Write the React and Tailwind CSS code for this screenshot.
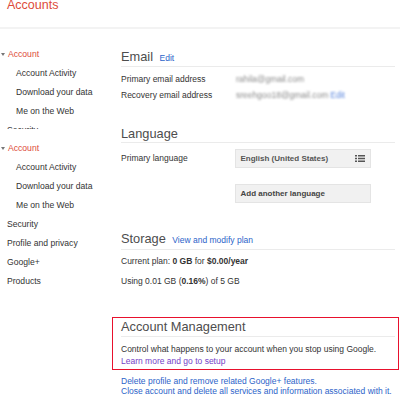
import React from 'react';

const font = { fontFamily: '"Liberation Sans", Arial, sans-serif' };

const Arrow = () => (
    <span className="inline-block w-0 h-0 border-l-[2px] border-r-[2px] border-t-[3px] border-l-transparent border-r-transparent border-t-[#777] mr-[3.5px] ml-[0.5px]" />
);

const NavBlock = () => (
    <>
        <div className="h-[19px] flex items-center text-[#dd4b39]">
            <Arrow />
            Account
        </div>
        <div className="h-[19px] flex items-center pl-[16px] text-[#333]">Account Activity</div>
        <div className="h-[19px] flex items-center pl-[16px] text-[#333]">Download your data</div>
        <div className="h-[19px] flex items-center pl-[16px] text-[#333]">Me on the Web</div>
        <div className="h-[19px] flex items-center pl-[7px] text-[#333]">Security</div>
    </>
);

const Heading = ({ title, link, className = '' }) => (
    <div className={`flex items-baseline gap-[6.5px] border-b border-[#ebebeb] pb-[1.5px] ${className}`}>
        <span className="text-[12.8px] leading-[14px] text-[#4d4d4d]">{title}</span>
        {link && <span className="text-[8.5px] text-[#2b63c9]">{link}</span>}
    </div>
);

const ListIcon = () => (
    <svg width="10" height="7" viewBox="0 0 10 7" className="fill-[#555]">
        <rect x="0" y="0" width="2" height="1.5" />
        <rect x="3" y="0" width="7" height="1.5" />
        <rect x="0" y="2.75" width="2" height="1.5" />
        <rect x="3" y="2.75" width="7" height="1.5" />
        <rect x="0" y="5.5" width="2" height="1.5" />
        <rect x="3" y="5.5" width="7" height="1.5" />
    </svg>
);

export default function App() {
    return (
        <div className="w-[400px] h-[400px] overflow-hidden bg-white" style={font}>
            {/* header */}
            <div className="h-[27px] pl-[7px] overflow-hidden">
                <div className="-mt-[1px] text-[12.5px] leading-[12px] text-[#dd4b39]">Accounts</div>
            </div>
            <div className="h-[2px] bg-[#f3f3f3]" />

            <div className="flex">
                {/* sidebar */}
                <div className="w-[121px] shrink-0 text-[8.6px]">
                    <div className="mt-[16px] h-[83.5px] overflow-hidden">
                        <NavBlock />
                    </div>
                    <div className="mt-[10px]">
                        <NavBlock />
                        <div className="h-[19px] flex items-center pl-[7px] text-[#333]">Profile and privacy</div>
                        <div className="h-[19px] flex items-center pl-[7px] text-[#333]">Google+</div>
                        <div className="h-[19px] flex items-center pl-[7px] text-[#333]">Products</div>
                    </div>
                </div>

                {/* main */}
                <div className="w-[274px] shrink-0 text-[8.5px] text-[#333]">
                    <Heading title="Email" link="Edit" className="mt-[20.5px]" />
                    <div className="mt-[5px]">
                        <div className="flex h-[16px] items-center">
                            <span className="w-[115px]">Primary email address</span>
                            <span className="blur-[1.2px] text-[#8a8a8a]">rahila@gmail.com</span>
                        </div>
                        <div className="flex h-[16px] items-center">
                            <span className="w-[115px]">Recovery email address</span>
                            <span className="blur-[1.2px] text-[#8a8a8a]">sreehgoo18@gmail.com</span>
                            <span className="blur-[1.2px] text-[#5a86dd] ml-[2px]">Edit</span>
                        </div>
                    </div>

                    <Heading title="Language" className="mt-[23px]" />
                    <div className="mt-[6px] flex items-center">
                        <span className="w-[114px]">Primary language</span>
                        <div className="w-[136px] h-[19px] bg-[#f1f1f1] border border-[#e4e4e4] flex items-center justify-between pl-[4.5px] pr-[5px] font-bold text-[8px] text-[#555]">
                            English (United States)
                            <ListIcon />
                        </div>
                    </div>
                    <div className="mt-[16px] ml-[114px] w-[136px] h-[19px] bg-[#f1f1f1] border border-[#e4e4e4] flex items-center pl-[4.5px] font-bold text-[8px] text-[#444]">
                        Add another language
                    </div>

                    <Heading title="Storage" link="View and modify plan" className="mt-[29px]" />
                    <div className="mt-[1.5px] h-[20px] flex items-center">
                        <span>Current plan: <b>0 GB</b> for <b>$0.00/year</b></span>
                    </div>
                    <div className="h-[20px] flex items-center">
                        <span>Using 0.01 GB (<b>0.16%</b>) of 5 GB</span>
                    </div>

                    {/* account management */}
                    <div className="mt-[25.5px] -ml-[9px] -mr-[4px] border border-[#e8112d] pl-[8px] pr-[3px] pt-[2.5px] pb-[2px]">
                        <Heading title="Account Management" />
                        <div className="mt-[6.3px] leading-[12px]">Control what happens to your account when you stop using Google.</div>
                        <div className="leading-[12px] text-[#7442c8]">Learn more and go to setup</div>
                    </div>
                    <div className="mt-[5.8px] leading-[10px] text-[#2b63c9]">
                        <div>Delete profile and remove related Google+ features.</div>
                        <div>Close account and delete all services and information associated with it.</div>
                    </div>
                </div>
            </div>
        </div>
    );
}
